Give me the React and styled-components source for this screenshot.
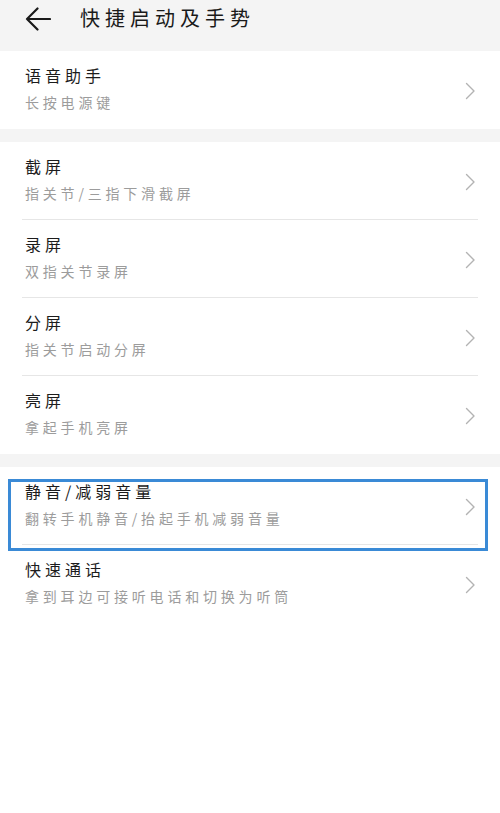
import styled, { createGlobalStyle } from "styled-components";

const GlobalStyle = createGlobalStyle`
    html, body {
        margin: 0;
        padding: 0;
        background: #ffffff;
    }
    body {
        font-family: "Noto Sans CJK SC", "Noto Sans", sans-serif;
    }
`;

const groups = [
    [{ title: "语音助手", desc: "长按电源键" }],
    [
        { title: "截屏", desc: "指关节/三指下滑截屏" },
        { title: "录屏", desc: "双指关节录屏" },
        { title: "分屏", desc: "指关节启动分屏" },
        { title: "亮屏", desc: "拿起手机亮屏" },
    ],
    [
        { title: "静音/减弱音量", desc: "翻转手机静音/抬起手机减弱音量", marked: true },
        { title: "快速通话", desc: "拿到耳边可接听电话和切换为听筒" },
    ],
];

export default function App() {
    return (
        <Page>
            <GlobalStyle />
            <Header>
                <BackButton>
                    <svg width="26" height="24" viewBox="0 0 26 24" fill="none">
                        <path
                            d="M25 12H2M12.5 1.5L2 12l10.5 10.5"
                            stroke="#1a1a1a"
                            strokeWidth="2.2"
                            strokeLinecap="round"
                            strokeLinejoin="round"
                        />
                    </svg>
                </BackButton>
                <HeaderTitle>快捷启动及手势</HeaderTitle>
            </Header>
            {groups.map((group, gi) => (
                <Group key={gi} $last={gi === groups.length - 1}>
                    {group.map((item, i) => (
                        <Row key={item.title} $marked={item.marked}>
                            <RowText>
                                <RowTitle>{item.title}</RowTitle>
                                <RowDesc>{item.desc}</RowDesc>
                            </RowText>
                            <Chevron>
                                <svg width="11" height="18" viewBox="0 0 11 18" fill="none">
                                    <path
                                        d="M1.5 1.5L9 9l-7.5 7.5"
                                        stroke="#b3b3b3"
                                        strokeWidth="1.4"
                                        strokeLinecap="round"
                                        strokeLinejoin="round"
                                    />
                                </svg>
                            </Chevron>
                            {i < group.length - 1 && <Divider />}
                        </Row>
                    ))}
                </Group>
            ))}
        </Page>
    );
}

const Page = styled.div`
    width: 500px;
    min-height: 813px;
    background: #f4f4f4;
    display: flex;
    flex-direction: column;
`;

const Header = styled.div`
    height: 51px;
    display: flex;
    align-items: flex-start;
    padding: 0 0 0 25px;
    background: #f4f4f4;
`;

const BackButton = styled.div`
    width: 26px;
    height: 24px;
    margin-top: 7px;
    display: flex;
`;

const HeaderTitle = styled.div`
    margin-left: 29px;
    margin-top: 3px;
    font-size: 20px;
    line-height: 30px;
    letter-spacing: 5px;
    color: #1a1a1a;
`;

const Group = styled.div`
    background: #ffffff;
    margin-bottom: ${(p) => (p.$last ? "0" : "13px")};
    flex: ${(p) => (p.$last ? "1" : "none")};
    display: flex;
    flex-direction: column;
`;

const Row = styled.div`
    position: relative;
    height: 78px;
    box-sizing: border-box;
    padding: 13px 24px 0 25px;
    display: flex;
    align-items: flex-start;
    justify-content: space-between;

    ${(p) =>
        p.$marked &&
        `
        &::after {
            content: "";
            position: absolute;
            left: 8px;
            right: 12px;
            top: 12px;
            bottom: -6px;
            border: 3px solid #3a8ad6;
            z-index: 2;
        }
    `}
`;

const RowText = styled.div`
    display: flex;
    flex-direction: column;
    gap: 6px;
`;

const RowTitle = styled.div`
    font-size: 16px;
    line-height: 22px;
    letter-spacing: 4px;
    color: #1c1c1c;
`;

const RowDesc = styled.div`
    font-size: 14px;
    line-height: 20px;
    letter-spacing: 3.8px;
    color: #9c9c9c;
`;

const Chevron = styled.div`
    align-self: center;
    margin-top: -12px;
    display: flex;
`;

const Divider = styled.div`
    position: absolute;
    left: 22px;
    right: 22px;
    bottom: 0;
    height: 1px;
    background: #e6e6e6;
`;
